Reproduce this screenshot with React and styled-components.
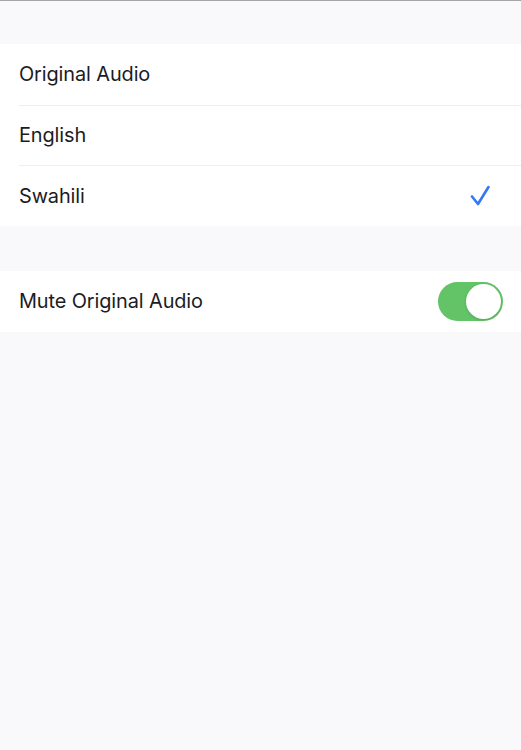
import React, { useState } from "react";
import styled, { createGlobalStyle } from "styled-components";

const Global = createGlobalStyle`
  html, body { margin: 0; padding: 0; background: #f9f8fb; }
  body { font-family: Inter, "Noto Sans", sans-serif; -webkit-font-smoothing: antialiased; }
`;

const Page = styled.div`
  min-height: 750px;
  background: #f9f8fb;
  border-top: 1px solid #a4a4a6;
  box-sizing: border-box;
  padding-top: 43px;
  display: flex;
  flex-direction: column;
  gap: 45px;
`;

const Group = styled.div`
  background: #ffffff;
  display: flex;
  flex-direction: column;
`;

const Row = styled.div`
  height: 60.67px;
  display: flex;
  align-items: center;
  justify-content: space-between;
  padding: 0 19px;
  position: relative;
  box-sizing: border-box;
  & + &::before {
    content: "";
    position: absolute;
    top: 0;
    left: 19px;
    right: 0;
    height: 1px;
    background: #efeef2;
  }
`;

const Label = styled.span`
  font-size: 19.9px;
  font-weight: 400;
  color: #1c1c1f;
  letter-spacing: -0.1px;
`;

const Toggle = styled.button`
  width: 65px;
  height: 39px;
  border-radius: 20px;
  border: none;
  padding: 2px;
  background: ${(p) => (p.$on ? "#62c466" : "#e5e5ea")};
  display: flex;
  justify-content: ${(p) => (p.$on ? "flex-end" : "flex-start")};
  align-items: center;
  margin-right: -1px;
  cursor: pointer;
`;

const Knob = styled.span`
  width: 35px;
  height: 35px;
  border-radius: 50%;
  background: #ffffff;
  box-shadow: 0 1px 3px rgba(0, 0, 0, 0.15);
`;

const Check = () => (
  <svg width="20" height="22" viewBox="0 0 20 22" style={{ marginRight: 12 }}>
    <path
      d="M2 11.5 L8 19 L18.5 2"
      fill="none"
      stroke="#3478f6"
      strokeWidth="2.6"
      strokeLinecap="round"
      strokeLinejoin="round"
    />
  </svg>
);

const languages = ["Original Audio", "English", "Swahili"];

export default function App() {
  const [selected, setSelected] = useState("Swahili");
  const [muted, setMuted] = useState(true);
  return (
    <>
      <Global />
      <Page>
        <Group>
          {languages.map((l) => (
            <Row key={l} onClick={() => setSelected(l)}>
              <Label>{l}</Label>
              {selected === l && <Check />}
            </Row>
          ))}
        </Group>
        <Group>
          <Row>
            <Label>Mute Original Audio</Label>
            <Toggle $on={muted} onClick={() => setMuted(!muted)}>
              <Knob />
            </Toggle>
          </Row>
        </Group>
      </Page>
    </>
  );
}
